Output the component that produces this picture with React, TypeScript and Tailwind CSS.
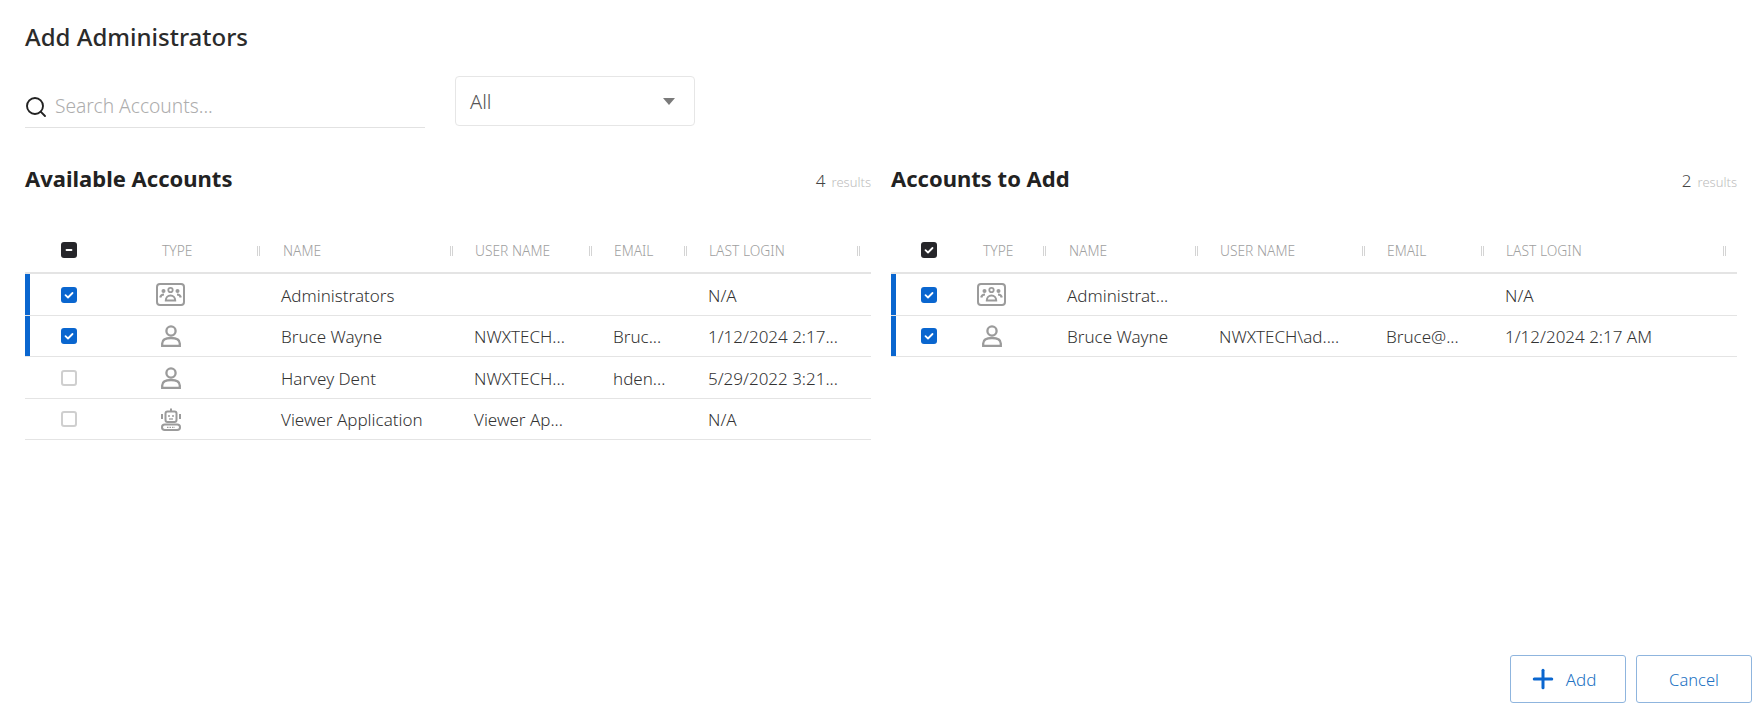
import React from 'react';
import { Search, Plus } from 'lucide-react';

const FONT = "font-['Noto_Sans',sans-serif]";

const leftCols = 'grid-cols-[130px_126px_193px_139px_95px_163px]';
const rightCols = 'grid-cols-[85px_91px_152px_167px_119px_232px]';

type Kind = 'group' | 'user' | 'app';
type Row = { kind: Kind; checked: boolean; name: string; user: string; email: string; login: string };

const available: Row[] = [
  { kind: 'group', checked: true, name: 'Administrators', user: '', email: '', login: 'N/A' },
  { kind: 'user', checked: true, name: 'Bruce Wayne', user: 'NWXTECH...', email: 'Bruc...', login: '1/12/2024 2:17...' },
  { kind: 'user', checked: false, name: 'Harvey Dent', user: 'NWXTECH...', email: 'hden...', login: '5/29/2022 3:21...' },
  { kind: 'app', checked: false, name: 'Viewer Application', user: 'Viewer Ap...', email: '', login: 'N/A' },
];

const toAdd: Row[] = [
  { kind: 'group', checked: true, name: 'Administrat...', user: '', email: '', login: 'N/A' },
  { kind: 'user', checked: true, name: 'Bruce Wayne', user: 'NWXTECH\\ad....', email: 'Bruce@...', login: '1/12/2024 2:17 AM' },
];

const TypeIcon = ({ kind }: { kind: Kind }) => {
  if (kind === 'group') {
    return (
      <svg width="29" height="23" viewBox="0 0 29 23" fill="none" stroke="#9b9b9b" strokeWidth="2">
        <rect x="1" y="1" width="27" height="21" rx="3" />
        <circle cx="14.5" cy="7" r="2.2" strokeWidth="1.8" />
        <circle cx="7.5" cy="8" r="2" fill="#9b9b9b" stroke="none" />
        <circle cx="21.5" cy="8" r="2" fill="#9b9b9b" stroke="none" />
        <path d="M9.8 17.5c0-3 2-5 4.7-5s4.7 2 4.7 5z" strokeWidth="2" />
        <path d="M4.2 14.5c.4-1.8 1.7-2.9 3.8-3M24.8 14.5c-.4-1.8-1.7-2.9-3.8-3" strokeWidth="2.2" />
      </svg>
    );
  }
  if (kind === 'user') {
    return (
      <svg width="20" height="22" viewBox="0 0 20 22" fill="none" stroke="#9b9b9b" strokeWidth="2.3">
        <circle cx="10" cy="6" r="4.6" />
        <path d="M1.2 20.8v-2.3C1.2 15 4.5 13 10 13s8.8 2 8.8 5.5v2.3z" />
      </svg>
    );
  }
  return (
    <svg width="20" height="23" viewBox="0 0 20 23" fill="none" stroke="#9b9b9b" strokeWidth="2">
      <path d="M10 0.5v3" />
      <rect x="4.5" y="3.5" width="11" height="10.5" rx="2" />
      <circle cx="8" cy="8" r="1" fill="#9b9b9b" stroke="none" />
      <circle cx="12" cy="8" r="1" fill="#9b9b9b" stroke="none" />
      <path d="M8 11h4" strokeWidth="1.3" />
      <path d="M1 6v5M19 6v5" />
      <rect x="1" y="16.5" width="18" height="5.5" rx="2.75" />
      <path d="M6 19.3h8" strokeWidth="1.3" strokeDasharray="1.5 1" />
    </svg>
  );
};

const Box = ({ state }: { state: 'on' | 'off' | 'dark' | 'mixed' }) => {
  if (state === 'off') {
    return <span className="block w-4 h-4 rounded-[3px] border-2 border-[#cfcfcf] bg-white" />;
  }
  return (
    <span className={`flex items-center justify-center w-4 h-4 rounded-[3px] ${state === 'on' ? 'bg-[#0a66cf]' : 'bg-[#26262a]'}`}>
      <svg width="10" height="10" viewBox="0 0 10 10" fill="none" stroke="white" strokeWidth="1.8" strokeLinecap="round" strokeLinejoin="round">
        {state === 'mixed' ? <path d="M2.5 5h5" /> : <path d="M1.5 5.2 4 7.5l4.5-4.5" />}
      </svg>
    </span>
  );
};

const HeadCell = ({ label, pl, pr }: { label: string; pl: string; pr: string }) => (
  <div className={`flex items-center justify-between ${pl} ${pr}`}>
    <span className="pt-[1px] text-[13.8px] font-light text-[#a0a0a0] uppercase whitespace-nowrap">{label}</span>
    <span className="flex gap-[1px]">
      <span className="w-px h-[10px] bg-[#d4d4d4]" />
      <span className="w-px h-[10px] bg-[#d4d4d4]" />
    </span>
  </div>
);

const Table = ({ rows, cols, boxLeft, head }: { rows: Row[]; cols: string; boxLeft: string; head: 'mixed' | 'dark' }) => (
  <div>
    <div className={`grid ${cols} h-[45px] items-center border-b-2 border-[#e4e4e4]`}>
      <div className={`${boxLeft} pb-[2px]`}>
        <Box state={head} />
      </div>
      <HeadCell label="Type" pl="pl-[7px]" pr="pr-[21px]" />
      <HeadCell label="Name" pl="pl-[2px]" pr="pr-[21px]" />
      <HeadCell label="User Name" pl="pl-[1px]" pr="pr-[21px]" />
      <HeadCell label="Email" pl="pl-[1px]" pr="pr-[21px]" />
      <HeadCell label="Last Login" pl="pl-[1px]" pr="pr-[11px]" />
    </div>
    {rows.map((r) => (
      <div key={r.name} className={`grid ${cols} h-[41.5px] items-center border-b border-[#e4e4e4] text-[17px] font-[350] text-[#333] whitespace-nowrap`}>
        <div className="flex items-center h-full relative">
          {r.checked && <span className="absolute left-0 top-0 bottom-0 w-[5px] bg-[#0a66cf]" />}
          <div className={`${boxLeft} pt-[1px]`}>
            <Box state={r.checked ? 'on' : 'off'} />
          </div>
        </div>
        <div className={`flex pt-[1px] ${r.kind === 'group' ? 'pl-[1px]' : 'pl-[6px]'}`}>
          <TypeIcon kind={r.kind} />
        </div>
        <div className="pt-[2px]">{r.name}</div>
        <div className="pt-[2px]">{r.user}</div>
        <div className="pt-[2px]">{r.email}</div>
        <div className="pt-[2px]">{r.login}</div>
      </div>
    ))}
  </div>
);

const Panel = ({ title, count, children }: { title: string; count: number; children: React.ReactNode }) => (
  <section className="w-[846px]">
    <div className="flex items-center justify-between h-[32px]">
      <h2 className="text-[22px] font-bold text-[#222] pb-[2px]">{title}</h2>
      <div className="flex items-baseline gap-[6px] pt-[3px]">
        <span className="text-[17px] font-light text-[#444]">{count}</span>
        <span className="text-[13px] font-light text-[#bdbdbd]">results</span>
      </div>
    </div>
    <div className="mt-[34px]">{children}</div>
  </section>
);

const App: React.FC = () => {
  return (
    <div className={`h-screen flex flex-col overflow-hidden bg-white pl-[25px] pr-[11px] pt-[21px] pb-[18px] ${FONT}`}>
      <h1 className="text-[24px] leading-[32px] font-medium text-[#2b2b2b]">Add Administrators</h1>

      {/* Filters */}
      <div className="flex gap-[30px] mt-[23px]">
        <label className="flex items-center gap-[7px] w-[400px] h-[52px] pt-[10px] border-b border-[#e2e2e2]">
          <Search size={24} color="#222" strokeWidth={1.9} className="-ml-[1px]" />
          <input
            placeholder="Search Accounts..."
            className="flex-1 outline-none text-[19.2px] font-light text-[#333] placeholder:text-[#adadad] bg-transparent"
          />
        </label>
        <button className="flex items-center justify-between w-[240px] h-[50px] pl-[14px] pr-[19px] bg-white border border-[#e6e6e6] rounded-[4px] text-[20px] font-[350] text-[#555]">
          <span className="pt-[2px]">All</span>
          <span className="w-0 h-0 border-l-[6.5px] border-r-[6.5px] border-t-[7px] border-l-transparent border-r-transparent border-t-[#7a7a7a]" />
        </button>
      </div>

      {/* Tables */}
      <div className="flex gap-[20px] mt-[35px]">
        <Panel title="Available Accounts" count={4}>
          <Table rows={available} cols={leftCols} boxLeft="pl-[36px]" head="mixed" />
        </Panel>
        <Panel title="Accounts to Add" count={2}>
          <Table rows={toAdd} cols={rightCols} boxLeft="pl-[30px]" head="dark" />
        </Panel>
      </div>

      {/* Footer buttons */}
      <div className="mt-auto flex justify-end gap-[10px]">
        <button className="flex items-center justify-center gap-[8px] w-[116px] h-[48px] pr-[12px] border border-[#8fb5de] rounded-[3px] text-[17px] font-[350] text-[#2272c3]">
          <Plus size={30} color="#0a66cf" strokeWidth={2.4} />
          <span className="pt-[2px]">Add</span>
        </button>
        <button className="flex items-center justify-center w-[116px] h-[48px] pt-[2px] border border-[#8fb5de] rounded-[3px] text-[16.5px] font-[350] text-[#2272c3]">
          Cancel
        </button>
      </div>
    </div>
  );
};

export default App;
